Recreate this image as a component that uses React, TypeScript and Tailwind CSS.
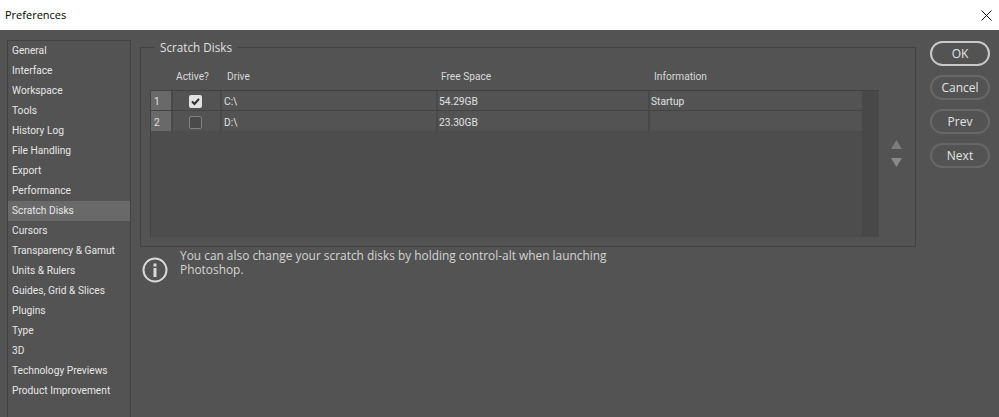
const categories = [
  'General',
  'Interface',
  'Workspace',
  'Tools',
  'History Log',
  'File Handling',
  'Export',
  'Performance',
  'Scratch Disks',
  'Cursors',
  'Transparency & Gamut',
  'Units & Rulers',
  'Guides, Grid & Slices',
  'Plugins',
  'Type',
  '3D',
  'Technology Previews',
  'Product Improvement',
];

const disks = [
  { id: 1, active: true, drive: 'C:\\', free: '54.29GB', info: 'Startup' },
  { id: 2, active: false, drive: 'D:\\', free: '23.30GB', info: '' },
];

const font = "font-['Roboto',sans-serif]";

function DialogButton({ label, primary }: { label: string; primary?: boolean }) {
  return (
    <button
      className={`h-[25px] w-[60px] rounded-full text-[12px] text-[#e4e4e4] font-['Open_Sans',sans-serif] ${
        primary ? 'border-2 border-[#c9c9c9]' : 'border-2 border-[#676767]'
      }`}
    >
      {label}
    </button>
  );
}

function Checkbox({ checked }: { checked: boolean }) {
  if (!checked) {
    return <div className="h-[13px] w-[13px] rounded-[2px] border border-[#828282] bg-[#4a4a4a]" />;
  }
  return (
    <div className="flex h-[13px] w-[13px] items-center justify-center rounded-[2px] bg-[#e2e2e2]">
      <svg width="11" height="11" viewBox="0 0 11 11" fill="none">
        <path d="M2 5.5L4.5 8L9 2.8" stroke="#2f2f2f" strokeWidth="2" />
      </svg>
    </div>
  );
}

export default function App() {
  return (
    <div className={`flex h-[417px] w-[999px] flex-col overflow-hidden bg-[#535353] ${font}`}>
      {/* title bar */}
      <div className="flex h-[30px] items-center justify-between bg-white pr-[7px] pl-[5px]">
        <span className="text-[11px] text-black font-['Open_Sans',sans-serif]">Preferences</span>
        <svg width="11" height="11" viewBox="0 0 11 11" fill="none">
          <path d="M0.5 0.5L10.5 10.5M10.5 0.5L0.5 10.5" stroke="#111" strokeWidth="1" />
        </svg>
      </div>

      <div className="flex flex-1 pt-[10px] pl-[7px]">
        {/* category list */}
        <div className="w-[124px] border-x border-t border-[#424242]">
          {categories.map((name) => (
            <div
              key={name}
              className={`flex h-[20px] items-center pl-[4px] text-[10.2px] whitespace-nowrap text-[#e6e6e6] ${
                name === 'Scratch Disks' ? 'bg-[#696969]' : ''
              }`}
            >
              {name}
            </div>
          ))}
        </div>

        <div className="ml-[9px] w-[776px]">
          {/* scratch disks group */}
          <div className="relative mt-[7px] flex h-[200px] border border-[#424242] pl-[9px]">
            <div className="absolute -top-[9px] left-[14px] bg-[#535353] px-[5px] text-[11.7px] leading-[16px] text-[#e0e0e0] font-['Open_Sans',sans-serif]">
              Scratch Disks
            </div>

            <div className="w-[729px]">
              <div className="flex h-[42px] items-end pb-[6px] text-[10.2px] text-[#d8d8d8]">
                <span className="ml-[26px] w-[51px]">Active?</span>
                <span className="w-[214px]">Drive</span>
                <span className="w-[213px]">Free Space</span>
                <span>Information</span>
              </div>
              <div className="flex h-[147px] border-t border-l border-[#424242] bg-[#4d4d4d]">
                <div className="flex-1">
                  {disks.map((d) => {
                    // second row sits a pixel lower in its cells
                    const pad = d.id === 1 ? 'pt-[2px]' : 'pt-[3px]';
                    return (
                      <div
                        key={d.id}
                        className={`flex h-[20px] bg-[#535353] text-[10.2px] text-[#e0e0e0] ${
                          d.id === 1 ? 'border-b border-[#444444]' : ''
                        }`}
                      >
                        <div className={`flex w-[20px] items-center bg-[#696969] pl-[3px] ${pad}`}>{d.id}</div>
                        <div className={`flex w-[51px] items-center justify-center border-x-2 border-[#484848] pr-[2px] ${pad}`}>
                          <Checkbox checked={d.active} />
                        </div>
                        <div className={`flex w-[216px] items-center border-r-2 border-[#484848] pl-[2px] ${pad}`}>{d.drive}</div>
                        <div className={`flex w-[212px] items-center border-r-2 border-[#484848] pl-[1px] ${pad}`}>{d.free}</div>
                        <div className={`flex flex-1 items-center pl-[1px] ${pad}`}>{d.info}</div>
                      </div>
                    );
                  })}
                </div>
                <div className="w-[17px] bg-[#484848]" />
              </div>
            </div>

            {/* move up / down */}
            <div className="ml-[12px] flex flex-col gap-[9px] pt-[92px]">
              <svg width="11" height="9" viewBox="0 0 11 9">
                <path d="M5.5 0L11 9H0Z" fill="#7b7b7b" />
              </svg>
              <svg width="11" height="9" viewBox="0 0 11 9">
                <path d="M0 0H11L5.5 9Z" fill="#8a8a8a" />
              </svg>
            </div>
          </div>

          {/* hint */}
          <div className="mt-[2px] flex pl-[2px]">
            <svg className="mt-[8px]" width="26" height="26" viewBox="0 0 26 26" fill="none">
              <circle cx="13" cy="13" r="11.5" stroke="#d8d8d8" strokeWidth="2" />
              <rect x="11.5" y="11" width="3" height="9" fill="#d8d8d8" />
              <rect x="11.5" y="6.5" width="3" height="3" fill="#d8d8d8" />
            </svg>
            <p className="-mt-[1px] ml-[12px] w-[450px] text-[11.9px] leading-[14px] text-[#d4d4d4] font-['Open_Sans',sans-serif]">
              You can also change your scratch disks by holding control-alt when launching Photoshop.
            </p>
          </div>
        </div>

        <div className="ml-[14px] flex flex-col gap-[9px] pt-[1px]">
          <DialogButton label="OK" primary />
          <DialogButton label="Cancel" />
          <DialogButton label="Prev" />
          <DialogButton label="Next" />
        </div>
      </div>
    </div>
  );
}
